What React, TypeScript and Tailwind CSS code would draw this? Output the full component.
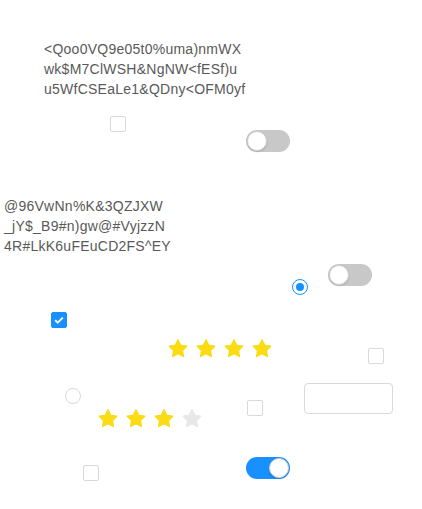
import React from 'react';

const STAR =
  'M908.1 353.1l-253.9-36.9L540.7 86.1c-3.1-6.3-8.2-11.4-14.5-14.5-15.8-7.8-35-1.3-42.9 14.5L369.8 316.2l-253.9 36.9c-7 1-13.4 4.3-18.3 9.3a32.05 32.05 0 00.6 45.3l183.7 179.1-43.4 252.9a31.95 31.95 0 0046.4 33.7L512 754l227.1 119.4c6.2 3.3 13.4 4.4 20.3 3.2 17.4-3 29.1-19.5 26.1-36.9l-43.4-252.9 183.7-179.1c5-4.9 8.3-11.3 9.3-18.3 2.7-17.5-9.5-33.7-27-36.3z';

// scattered form controls: each one sits at its own spot on a free canvas

const Checkbox = ({ checked = false, className = '' }: { checked?: boolean; className?: string }) => (
  <span
    className={`absolute flex h-4 w-4 items-center justify-center rounded-[2px] border ${checked ? 'border-[#1890ff] bg-[#1890ff]' : 'border-[#d9d9d9] bg-white'} ${className}`}
  >
    {checked && (
      <svg viewBox="0 0 16 16" className="h-4 w-4">
        <path d="M3.6 8.2l2.9 2.9 5.8-5.9" fill="none" stroke="white" strokeWidth="2.2" />
      </svg>
    )}
  </span>
);

const Radio = ({ checked = false, className = '' }: { checked?: boolean; className?: string }) => (
  <span
    className={`absolute flex h-4 w-4 items-center justify-center rounded-full border bg-white ${checked ? 'border-[#1890ff]' : 'border-[#d9d9d9]'} ${className}`}
  >
    {checked && <span className="h-2 w-2 rounded-full bg-[#1890ff]" />}
  </span>
);

const Switch = ({ on = false, className = '' }: { on?: boolean; className?: string }) => (
  <span
    className={`absolute flex h-[22px] w-[44px] items-center rounded-full px-px ${on ? 'justify-end bg-[#1890ff]' : 'justify-start bg-[#c8c8c8]'} ${className}`}
  >
    <span className="h-5 w-5 rounded-full border border-[#d0d0d0] bg-white shadow-[0_1px_2px_rgba(0,0,0,0.15)]" />
  </span>
);

const Rate = ({ value, className = '' }: { value: number; className?: string }) => (
  <div className={`absolute flex gap-2 ${className}`}>
    {[0, 1, 2, 3].map((i) => (
      <svg key={i} viewBox="64 64 896 896" className="h-5 w-5">
        <path d={STAR} fill={i < value ? '#fadb14' : '#e8e8e8'} />
      </svg>
    ))}
  </div>
);

const Lines = ({ lines, className = '' }: { lines: string[]; className?: string }) => (
  <div className={`absolute flex flex-col text-[14px] leading-[20px] tracking-[0.25px] text-[#595959] ${className}`}>
    {lines.map((l) => (
      <span key={l} className="whitespace-pre">
        {l}
      </span>
    ))}
  </div>
);

export default function App() {
  return (
    <div
      className="relative h-[509px] w-[422px] overflow-hidden bg-white"
      style={{ fontFamily: '"Liberation Sans", Arial, sans-serif' }}
    >
      <Lines
        className="left-[44px] top-[39px]"
        lines={['<Qoo0VQ9e05t0%uma)nmWX', 'wk$M7ClWSH&NgNW<fESf)u', 'u5WfCSEaLe1&QDny<OFM0yf']}
      />
      <Checkbox className="left-[110px] top-[116px]" />
      <Switch className="left-[246px] top-[130px]" />

      <Lines
        className="left-[4px] top-[196px]"
        lines={['@96VwNn%K&3QZJXW', '_jY$_B9#n)gw@#VyjzzN', '4R#LkK6uFEuCD2FS^EY']}
      />
      <Radio checked className="left-[292px] top-[279px]" />
      <Switch className="left-[328px] top-[264px]" />

      <Checkbox checked className="left-[51px] top-[312px]" />
      <Rate value={4} className="left-[168px] top-[339px]" />
      <Checkbox className="left-[368px] top-[348px]" />

      <Radio className="left-[65px] top-[388px]" />
      <input
        className="absolute left-[304px] top-[383px] h-[31px] w-[89px] rounded-[4px] border border-[#d9d9d9] outline-none"
        aria-label="input"
      />
      <Rate value={3} className="left-[98px] top-[409px]" />
      <Checkbox className="left-[247px] top-[400px]" />

      <Checkbox className="left-[83px] top-[465px]" />
      <Switch on className="left-[246px] top-[457px]" />
    </div>
  );
}
